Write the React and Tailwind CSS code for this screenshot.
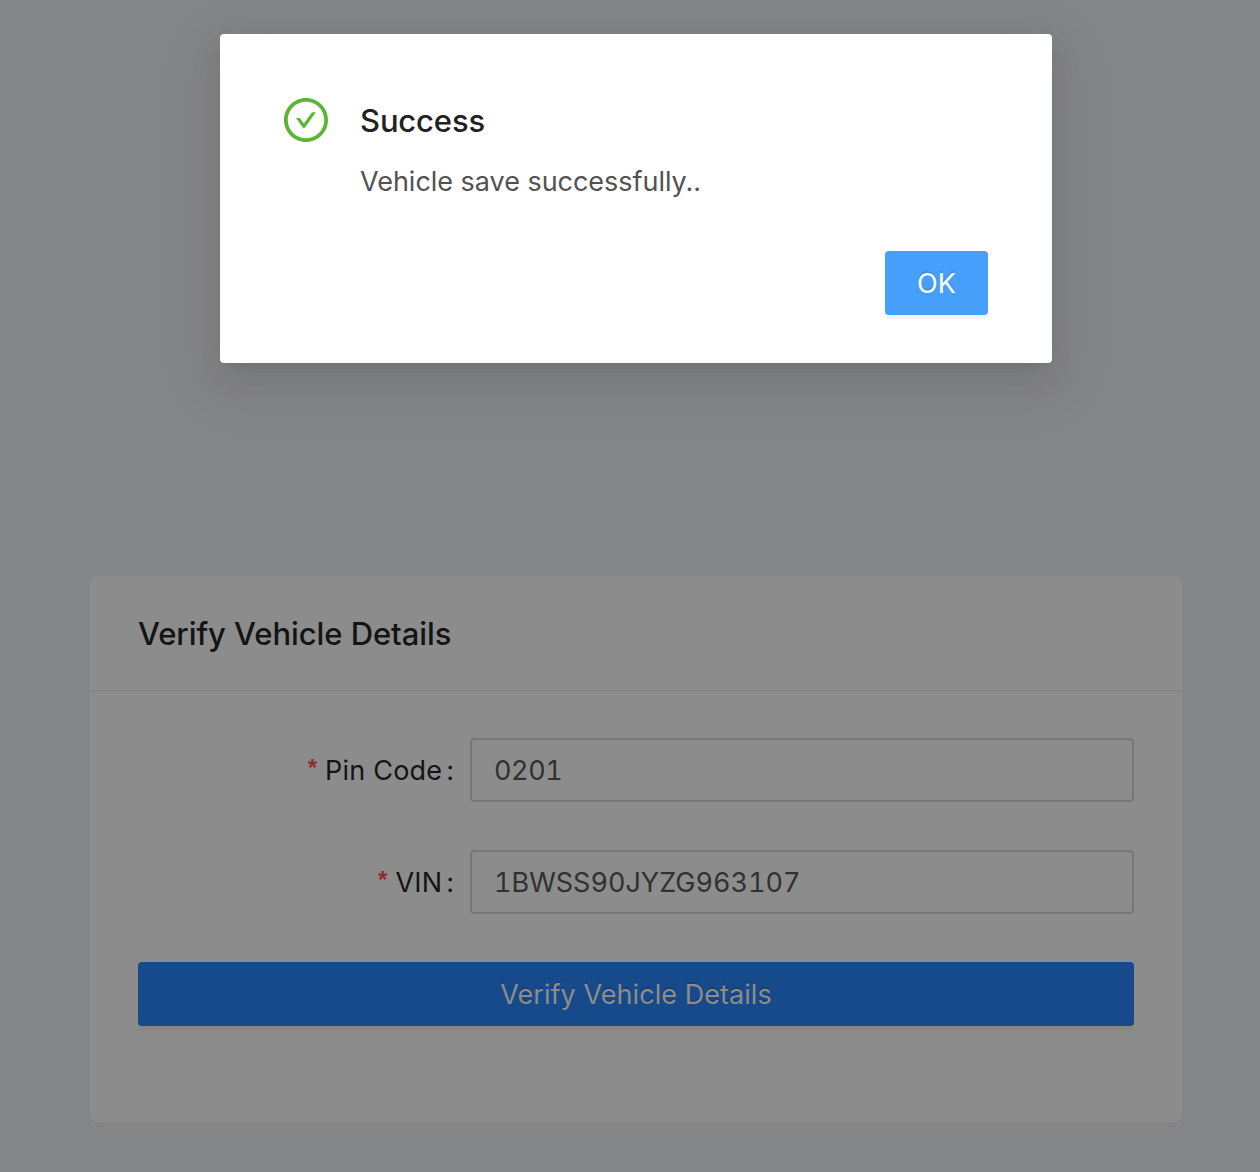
function Field({ label, value, valueSpacing }) {
  return (
    <div className="flex h-16 items-center">
      <div className="flex w-[332px] shrink-0 items-center justify-end pr-4 pt-[3px] text-[27px] text-[#141414]">
        <span className="mr-2 pb-2 font-['Liberation_Sans'] text-[24px] font-bold leading-none text-[#8f2d2e]">*</span>
        <span className="tracking-[0.2px]">{label}</span>
        <span className="ml-1">:</span>
      </div>
      <div className={`flex h-16 flex-1 items-center rounded-[4px] border-2 border-[#777777] px-[22px] pt-[3px] text-[27px] tabular-nums text-[#313131] ${valueSpacing}`}>
        {value}
      </div>
    </div>
  );
}

export default function App() {
  return (
    <div className="h-[1172px] w-[1260px] overflow-hidden bg-[#848587] font-['Inter',sans-serif]">
      <div className="ml-[220px] mt-[34px] flex h-[329px] w-[832px] flex-col rounded-[4px] bg-white px-16 pt-16 shadow-[0_6px_12px_-8px_rgba(0,0,0,0.12),0_12px_32px_0_rgba(0,0,0,0.08),0_18px_56px_16px_rgba(0,0,0,0.05)]">
        <div className="flex">
          <svg className="mr-8 h-11 w-11 shrink-0" viewBox="64 64 896 896" fill="#5cb533">
            <path d="M699 353h-46.9c-10.2 0-19.9 4.9-25.9 13.3L469 584.3l-71.2-98.8c-6-8.3-15.6-13.3-25.9-13.3H325c-6.5 0-10.3 7.4-6.5 12.7l124.6 172.8a31.8 31.8 0 0 0 51.7 0l210.6-292c3.9-5.3.1-12.7-6.4-12.7z" />
            <path d="M512 64C264.6 64 64 264.6 64 512s200.6 448 448 448 448-200.6 448-448S759.4 64 512 64zm0 820c-205.4 0-372-166.6-372-372s166.6-372 372-372 372 166.6 372 372-166.6 372-372 372z" />
          </svg>
          <div>
            <h1 className="text-[31px] font-medium leading-[45px] tracking-[-0.15px] text-[#222]">Success</h1>
            <p className="mt-[17px] text-[27px] leading-[44px] tracking-[-0.03px] text-[#525252]">Vehicle save successfully..</p>
          </div>
        </div>
        <button className="mt-[47px] flex h-16 w-[103px] items-center justify-center self-end rounded-[4px] bg-[#469ffb] pt-[3px] text-[27px] text-white shadow-[0_4px_0_rgba(0,0,0,0.045)] [text-shadow:0_-2px_0_rgba(0,0,0,0.12)]">OK</button>
      </div>
      <section className="ml-[90px] mt-[213px] h-[546px] w-[1092px] rounded-[8px] bg-[#8c8c8c]">
        <h2 className="flex h-[116px] items-center border-b-2 border-[#848484] px-12 pt-[3px] text-[31px] font-medium tracking-[-0.07px] text-[#141414]">Verify Vehicle Details</h2>
        <div className="flex flex-col gap-12 px-12 pt-[46px]">
          <Field label="Pin Code" value="0201" valueSpacing="tracking-[-0.4px]" />
          <Field label="VIN" value="1BWSS90JYZG963107" valueSpacing="tracking-[0px]" />
          <button className="h-16 rounded-[4px] bg-[#174a8b] pt-[3px] text-[27px] tracking-[0.05px] text-[#8c8c8c] shadow-[0_4px_0_rgba(0,0,0,0.045)] [text-shadow:0_-2px_0_rgba(0,0,0,0.12)]">Verify Vehicle Details</button>
        </div>
      </section>
    </div>
  );
}
